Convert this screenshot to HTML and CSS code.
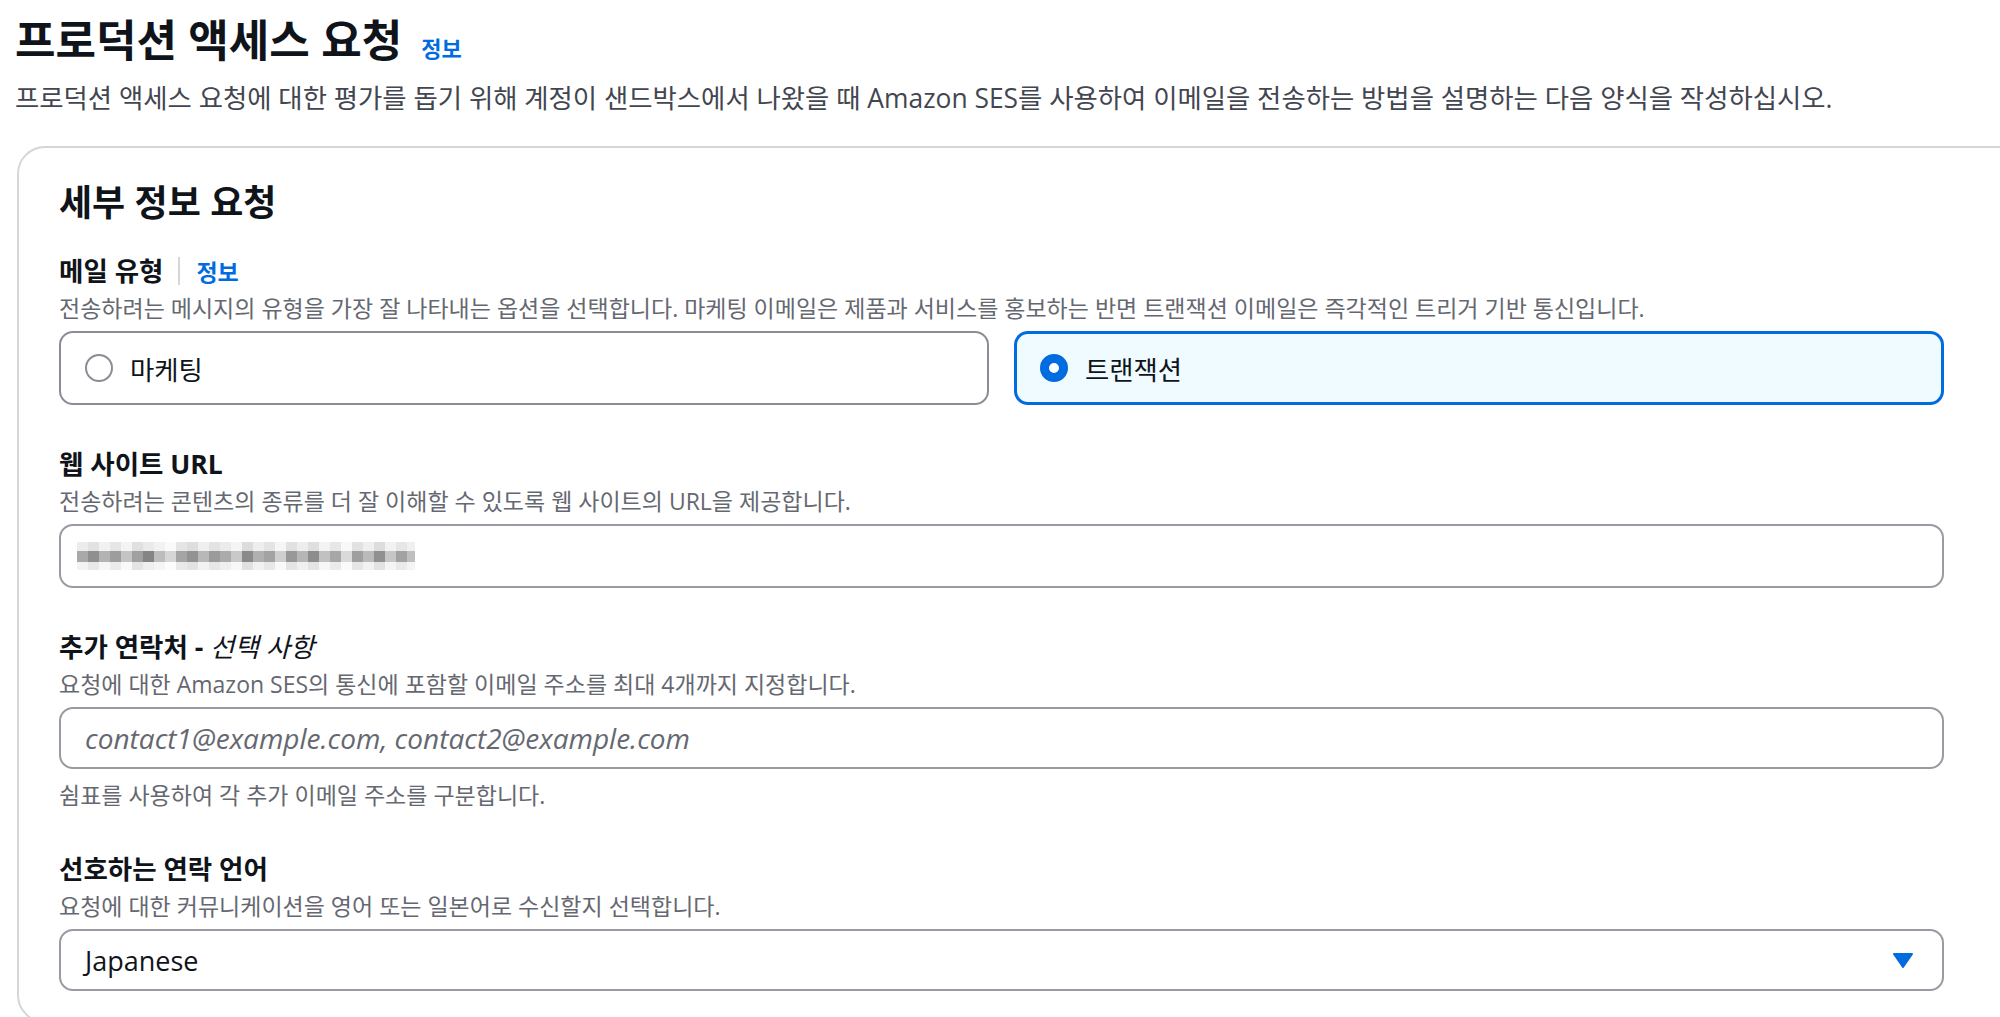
FILE: index.html
```html
<html>
	<head>
		<meta charset="utf-8">
		<link rel="stylesheet" href="styles.css">
	</head>
	<body>
		<div class="page-header">
			<h1 class="title">프로덕션 액세스 요청<a class="info-link title-info">정보</a></h1>
			<p class="subtitle">프로덕션 액세스 요청에 대한 평가를 돕기 위해 계정이 샌드박스에서 나왔을 때 Amazon SES를 사용하여 이메일을 전송하는 방법을 설명하는 다음 양식을 작성하십시오.</p>
		</div>

		<div class="card">
			<h2 class="card-title">세부 정보 요청</h2>

			<div class="field">
				<div class="label-row">
					<span class="label">메일 유형</span>
					<span class="divider"></span>
					<a class="info-link">정보</a>
				</div>
				<div class="desc">전송하려는 메시지의 유형을 가장 잘 나타내는 옵션을 선택합니다. 마케팅 이메일은 제품과 서비스를 홍보하는 반면 트랜잭션 이메일은 즉각적인 트리거 기반 통신입니다.</div>
				<div class="tiles">
					<div class="tile">
						<span class="radio"></span>
						<span class="tile-text">마케팅</span>
					</div>
					<div class="tile selected">
						<span class="radio checked"></span>
						<span class="tile-text">트랜잭션</span>
					</div>
				</div>
			</div>

			<div class="field">
				<div class="label-row"><span class="label">웹 사이트 URL</span></div>
				<div class="desc">전송하려는 콘텐츠의 종류를 더 잘 이해할 수 있도록 웹 사이트의 URL을 제공합니다.</div>
				<div class="input tall">
					<div class="blur">
						<div class="blur-row light"></div>
						<div class="blur-row dark"></div>
						<div class="blur-row light2"></div>
					</div>
				</div>
			</div>

			<div class="field">
				<div class="label-row"><span class="label">추가 연락처 - <i class="optional">선택 사항</i></span></div>
				<div class="desc">요청에 대한 Amazon SES의 통신에 포함할 이메일 주소를 최대 4개까지 지정합니다.</div>
				<div class="input"><span class="placeholder">contact1@example.com, contact2@example.com</span></div>
				<div class="constraint">쉼표를 사용하여 각 추가 이메일 주소를 구분합니다.</div>
			</div>

			<div class="field">
				<div class="label-row"><span class="label">선호하는 연락 언어</span></div>
				<div class="desc">요청에 대한 커뮤니케이션을 영어 또는 일본어로 수신할지 선택합니다.</div>
				<div class="input select">
					<span class="value">Japanese</span>
					<svg class="caret" width="20" height="15" viewBox="0 0 20 15"><path d="M1 1 L19 1 L10 14 Z" fill="#006ce0" stroke="#006ce0" stroke-width="2" stroke-linejoin="round"/></svg>
				</div>
			</div>
		</div>
	</body>
</html>
```

FILE: styles.css
```css
html, body {
	margin: 0;
	padding: 0;
	background: #ffffff;
	overflow: hidden;
	font-family: "Open Sans", "Noto Sans CJK KR", sans-serif;
	color: #0f141a;
}
.page-header {
	padding: 16px 0 0 15px;
}
.title {
	margin: 0;
	font-size: 44px;
	line-height: 48px;
	font-weight: 700;
}
.info-link {
	color: #006ce0;
	font-size: 23px;
	font-weight: 700;
	text-decoration: none;
}
.title-info {
	margin-left: 19px;
	font-size: 22px;
}
.subtitle {
	margin: 10px 0 0 0;
	font-size: 26.4px;
	line-height: 32px;
	color: #424650;
	white-space: nowrap;
}
.card {
	margin: 32px 0 0 17px;
	width: 2060px;
	box-sizing: border-box;
	border: 2px solid #d5d6da;
	border-radius: 28px;
	padding: 34px 0 30px 40px;
}
.card-title {
	margin: 0;
	font-size: 36px;
	line-height: 42px;
	font-weight: 700;
}
.field {
	width: 1885px;
	margin-top: 29px;
}
.field + .field {
	margin-top: 41px;
}
.label-row {
	display: flex;
	align-items: center;
	height: 36px;
}
.label {
	font-size: 26.5px;
	line-height: 36px;
	font-weight: 700;
}
.optional {
	font-weight: 400;
}
.divider {
	width: 2px;
	height: 28px;
	background: #d5d6da;
	margin: 0 16px 0 15px;
}
.desc, .constraint {
	font-size: 23px;
	line-height: 30px;
	color: #656871;
	margin-top: 4px;
	white-space: nowrap;
}
.constraint {
	margin-top: 11px;
}
.tiles {
	display: grid;
	grid-template-columns: 1fr 1fr;
	gap: 25px;
	margin-top: 8px;
}
.tile {
	height: 74px;
	box-sizing: border-box;
	border: 2px solid #8c8c94;
	border-radius: 14px;
	display: flex;
	align-items: center;
	padding-left: 24px;
	font-size: 26.4px;
}
.tile.selected {
	border: 3px solid #006ce0;
	background: #f0fbff;
	padding-left: 23px;
}
.radio {
	width: 28px;
	height: 28px;
	box-sizing: border-box;
	border: 2px solid #8c8c94;
	border-radius: 50%;
	background: #ffffff;
	margin-right: 17px;
	flex-shrink: 0;
}
.radio.checked {
	border: 9px solid #006ce0;
}
.input {
	margin-top: 8px;
	height: 62px;
	box-sizing: border-box;
	border: 2px solid #9a9ba2;
	border-radius: 14px;
	display: flex;
	align-items: center;
	padding: 0 29px 0 24px;
	font-size: 27px;
}
.input.tall {
	height: 64px;
	padding-left: 16px;
}
.placeholder {
	font-style: italic;
	color: #656871;
	font-size: 28px;
}
.select {
	justify-content: space-between;
}
.value {
	color: #0f141a;
}
.blur {
	width: 338px;
	display: flex;
	flex-direction: column;
}
.blur-row {
	height: 9px;
}
.blur-row.light {
	background: linear-gradient(90deg, #ececec 0 11px, #e2e2e2 11px 22px, #f1f1f1 22px 33px, #e6e6e6 33px 44px, #f4f4f4 44px 55px, #e0e0e0 55px 66px, #eaeaea 66px 77px, #f2f2f2 77px 88px, #fafafa 88px 99px, #e5e5e5 99px 110px, #dedede 110px 121px, #efefef 121px 132px, #e3e3e3 132px 143px, #ebebeb 143px 154px, #f5f5f5 154px 165px, #dcdcdc 165px 176px, #eeeeee 176px 187px, #e4e4e4 187px 198px, #f6f6f6 198px 209px, #e1e1e1 209px 220px, #ededed 220px 231px, #dfdfdf 231px 242px, #f3f3f3 242px 253px, #e7e7e7 253px 264px, #f8f8f8 264px 275px, #e2e2e2 275px 286px, #efefef 286px 297px, #dddddd 297px 308px, #f2f2f2 308px 319px, #e6e6e6 319px 330px, #f0f0f0 330px 338px);
}
.blur-row.dark {
	height: 11px;
	background: linear-gradient(90deg, #a9a9a9 0 11px, #8f8f8f 11px 22px, #b3b3b3 22px 33px, #9d9d9d 33px 44px, #c4c4c4 44px 55px, #a0a0a0 55px 66px, #858585 66px 77px, #bdbdbd 77px 88px, #d6d6d6 88px 99px, #a5a5a5 99px 110px, #939393 110px 121px, #b8b8b8 121px 132px, #9b9b9b 132px 143px, #ababab 143px 154px, #c9c9c9 154px 165px, #8a8a8a 165px 176px, #b0b0b0 176px 187px, #a3a3a3 187px 198px, #cfcfcf 198px 209px, #989898 209px 220px, #b6b6b6 220px 231px, #8d8d8d 231px 242px, #c1c1c1 242px 253px, #a7a7a7 253px 264px, #dadada 264px 275px, #9f9f9f 275px 286px, #bababa 286px 297px, #909090 297px 308px, #c6c6c6 308px 319px, #a2a2a2 319px 330px, #bfbfbf 330px 338px);
}
.blur-row.light2 {
	height: 8px;
	background: linear-gradient(90deg, #f3f3f3 0 11px, #e8e8e8 11px 22px, #f6f6f6 22px 33px, #ebebeb 33px 44px, #f9f9f9 44px 55px, #e4e4e4 55px 66px, #efefef 66px 77px, #f5f5f5 77px 88px, #fcfcfc 88px 99px, #e9e9e9 99px 110px, #e3e3e3 110px 121px, #f2f2f2 121px 132px, #e7e7e7 132px 143px, #efefef 143px 154px, #f8f8f8 154px 165px, #e1e1e1 165px 176px, #f1f1f1 176px 187px, #e8e8e8 187px 198px, #f9f9f9 198px 209px, #e5e5e5 209px 220px, #f0f0f0 220px 231px, #e4e4e4 231px 242px, #f6f6f6 242px 253px, #ebebeb 253px 264px, #fbfbfb 264px 275px, #e6e6e6 275px 286px, #f2f2f2 286px 297px, #e2e2e2 297px 308px, #f5f5f5 308px 319px, #eaeaea 319px 330px, #f4f4f4 330px 338px);
}
.caret {
	display: block;
}
```
